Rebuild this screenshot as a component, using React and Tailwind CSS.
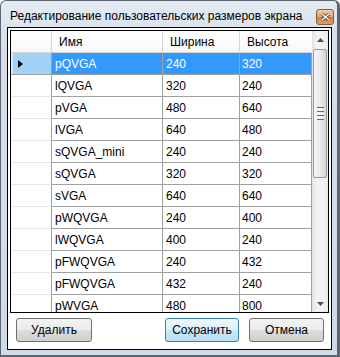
import React from "react";

const sizes = [
  { name: "pQVGA", w: 240, h: 320 },
  { name: "lQVGA", w: 320, h: 240 },
  { name: "pVGA", w: 480, h: 640 },
  { name: "lVGA", w: 640, h: 480 },
  { name: "sQVGA_mini", w: 240, h: 240 },
  { name: "sQVGA", w: 320, h: 320 },
  { name: "sVGA", w: 640, h: 640 },
  { name: "pWQVGA", w: 240, h: 400 },
  { name: "lWQVGA", w: 400, h: 240 },
  { name: "pFWQVGA", w: 240, h: 432 },
  { name: "pFWQVGA", w: 432, h: 240 },
  { name: "pWVGA", w: 480, h: 800 },
];

function WinButton({ children, primary, className }) {
  return (
    <div
      className={
        "h-[24px] flex items-center justify-center rounded-[3px] border text-[12px] text-black " +
        (primary
          ? "border-[#3c7fb1] bg-[linear-gradient(to_bottom,#ecf6fc_0%,#dcf0fb_50%,#c9e8f9_50%,#b7dff5_100%)] "
          : "border-[#707070] bg-[linear-gradient(to_bottom,#f2f2f2_0%,#ebebeb_50%,#dddddd_50%,#cfcfcf_100%)] ") +
        className
      }
    >
      <span className="leading-none">{children}</span>
    </div>
  );
}

function Scrollbar() {
  return (
    <div className="w-[16px] h-full flex flex-col bg-[linear-gradient(to_right,#e3e3e3,#f2f2f2_30%,#f2f2f2_70%,#e8e8e8)]">
      <div className="h-[17px] flex items-center justify-center">
        <svg width="7" height="4" viewBox="0 0 7 4">
          <path d="M0 4 L3.5 0 L7 4 Z" fill="#4d4d4d" />
        </svg>
      </div>
      <div className="flex-1 relative">
        <div className="absolute left-[1px] right-[1px] top-[1px] h-[129px] rounded-[2px] border border-[#9a9a9a] bg-[linear-gradient(to_right,#f6f6f6,#e9e9e9_50%,#d6d6d6)] flex flex-col items-center justify-center gap-[1px]">
          <div className="w-[7px] h-[1px] bg-[#6b6b6b]" />
          <div className="w-[7px] h-[1px] bg-[#ffffff]" />
          <div className="w-[7px] h-[1px] bg-[#6b6b6b]" />
          <div className="w-[7px] h-[1px] bg-[#ffffff]" />
          <div className="w-[7px] h-[1px] bg-[#6b6b6b]" />
          <div className="w-[7px] h-[1px] bg-[#ffffff]" />
          <div className="w-[7px] h-[1px] bg-[#6b6b6b]" />
        </div>
      </div>
      <div className="h-[17px] flex items-center justify-center">
        <svg width="7" height="4" viewBox="0 0 7 4">
          <path d="M0 0 L7 0 L3.5 4 Z" fill="#4d4d4d" />
        </svg>
      </div>
    </div>
  );
}

function Grid() {
  return (
    <div className="h-[283px] border border-black bg-white flex overflow-hidden">
      <div className="w-[301px] flex flex-col overflow-hidden">
        {/* header */}
        <div className="h-[22px] shrink-0 flex border-b border-[#d5d5d5] bg-[linear-gradient(to_bottom,#ffffff,#f7f8fa)] text-[12px] text-black">
          <div className="w-[41px] border-r border-[#d5d5d5]" />
          <div className="w-[111px] border-r border-[#d5d5d5] pl-[7px] flex items-center">Имя</div>
          <div className="w-[77px] border-r border-[#d5d5d5] pl-[7px] flex items-center">Ширина</div>
          <div className="w-[72px] pl-[7px] flex items-center">Высота</div>
        </div>
        {sizes.map((s, i) => {
          const sel = i === 0;
          return (
            <div key={i} className="h-[22px] shrink-0 flex text-[12px]">
              <div
                className={
                  "w-[41px] border-r border-r-[#a0a0a0] border-b flex items-center " +
                  (sel
                    ? "bg-[linear-gradient(to_right,#d3ebfc_0px,#d3ebfc_2px,#a2d3f6_2px)] border-b-[#a0a0a0]"
                    : "bg-white border-b-[#e6e6e6]")
                }
              >
                {sel && (
                  <svg width="5" height="8" viewBox="0 0 5 8" className="ml-[7px]">
                    <path d="M0 0 L5 4 L0 8 Z" fill="#000" />
                  </svg>
                )}
              </div>
              <div
                className={
                  "flex flex-1 border-b border-[#a0a0a0] " +
                  (sel ? "bg-[#3399ff] text-white" : "bg-white text-black")
                }
              >
                <div className="w-[111px] border-r border-[#a0a0a0] pl-[3px] flex items-center">{s.name}</div>
                <div className="w-[77px] border-r border-[#a0a0a0] pl-[3px] flex items-center">{s.w}</div>
                <div className="w-[72px] border-r border-[#a0a0a0] pl-[2px] flex items-center">{s.h}</div>
              </div>
            </div>
          );
        })}
      </div>
      <Scrollbar />
    </div>
  );
}

export default function App() {
  return (
    <div className="w-[340px] h-[357px] flex flex-col border-l border-t border-r-[3px] border-b-2 border-[#5b6672] rounded-t-[6px] bg-[linear-gradient(to_bottom,#e4ebf3,#d6e0eb_40px,#cfdbe8)] font-['Liberation_Sans',Arial,sans-serif]">
      <div className="h-[26px] shrink-0 flex items-start pl-[9px] pr-[3px]">
        <div className="mt-[7px] text-[12px] text-black leading-[16px]">
          Редактирование пользовательских размеров экрана
        </div>
        <div className="ml-auto mt-[8px] w-[18px] h-[16px] rounded-[3px] border border-[#8a5a35] bg-[linear-gradient(to_bottom,#f3cfa8,#dea16b_50%,#cc8248_50%,#dba06a)] flex items-center justify-center">
          <svg width="9" height="8" viewBox="0 0 9 8">
            <path d="M1 1 L8 7 M8 1 L1 7" stroke="#5a3a22" strokeWidth="3" />
            <path d="M1 1 L8 7 M8 1 L1 7" stroke="#ffffff" strokeWidth="1.6" />
          </svg>
        </div>
      </div>
      <div className="ml-[6px] mr-[5px] w-[325px] h-[323px] shrink-0 border border-black bg-white pt-[2px] px-[2px]">
        <Grid />
        <div className="flex mt-[5px] pl-[6px] pr-[5px]">
          <WinButton className="w-[76px]">Удалить</WinButton>
          <WinButton primary className="w-[74px] ml-auto mr-[10px]">Сохранить</WinButton>
          <WinButton className="w-[75px]">Отмена</WinButton>
        </div>
      </div>
    </div>
  );
}
